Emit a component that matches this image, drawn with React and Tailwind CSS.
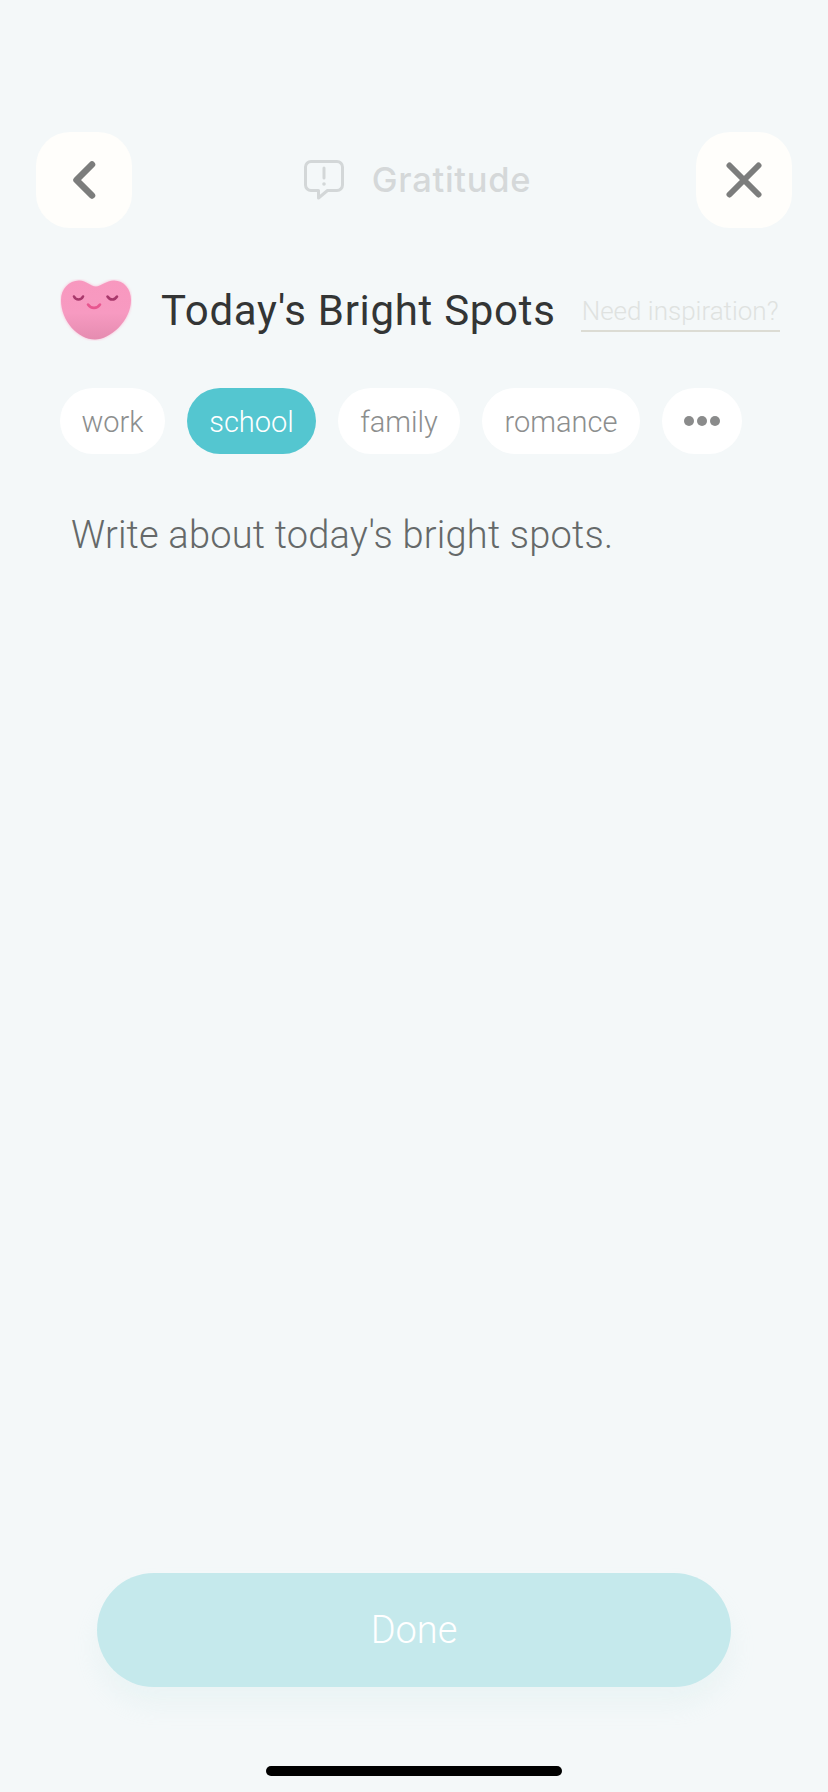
const chips = [
  { label: 'work', w: 'w-[105px]' },
  { label: 'school', w: 'w-[129px]', active: true },
  { label: 'family', w: 'w-[122px]' },
  { label: 'romance', w: 'w-[158px]' },
]

const heartPath = 'M19 1.5C27 1.5 30 7.5 36 7.5C41 7.5 46 1.5 54 1.5C64 1.5 71 10 71 21C71 42 50 60.5 35 60.5C18 60.5 1 42 1 21C1 10 9 1.5 19 1.5Z'

function IconButton({ children }) {
  return (
    <button className="w-[96px] h-[96px] rounded-[34px] bg-[#fffefb] flex items-center justify-center">
      {children}
    </button>
  )
}

function Heart() {
  return (
    <svg width="72" height="62" viewBox="0 0 72 62" className="shrink-0">
      <defs>
        <linearGradient id="heart" x1="0" y1="0" x2="0" y2="1">
          <stop offset="0" stopColor="#f898bf" />
          <stop offset="0.55" stopColor="#f79ac1" />
          <stop offset="1" stopColor="#e58cb0" />
        </linearGradient>
        <filter id="glow" x="-20%" y="-20%" width="140%" height="140%">
          <feGaussianBlur stdDeviation="1.5" />
        </filter>
      </defs>
      <path d={heartPath} fill="#fbb8d3" filter="url(#glow)" />
      <path d={heartPath} fill="url(#heart)" />
      <path d="M14 17.5C16 21.5 21 21.5 23 17.5M47.5 17.5C50 21.5 54.5 21.5 57 17.5" fill="none" stroke="#a8386b" strokeWidth="2.6" strokeLinecap="round" />
      <path d="M28 25.5C31 30 37 30 40 25.5" fill="none" stroke="#e8568f" strokeWidth="2.6" strokeLinecap="round" />
    </svg>
  )
}

export default function App() {
  return (
    <div className="w-[828px] h-[1792px] bg-[#f4f8f9] flex flex-col pt-[132px] font-['Roboto',sans-serif]">
      {/* Header */}
      <header className="flex items-center justify-between pl-[36px] pr-[36px]">
        <IconButton>
          <svg width="24" height="38" viewBox="0 0 24 38">
            <path d="M20 3.5L4.5 19L20 34.5" fill="none" stroke="#7c7d7c" strokeWidth="6.5" strokeLinecap="round" strokeLinejoin="round" />
          </svg>
        </IconButton>
        <div className="flex items-center gap-[27px] ml-[6px]">
          <svg width="42" height="42" viewBox="0 0 42 42">
            <path d="M8 2.5H34C37 2.5 39.5 5 39.5 8V26C39.5 29 37 31.5 34 31.5H24.5L15.5 39V31.5H8C5 31.5 2.5 29 2.5 26V8C2.5 5 5 2.5 8 2.5Z" fill="none" stroke="#d3d7d8" strokeWidth="3" strokeLinejoin="round" />
            <path d="M21 9V19" stroke="#d3d7d8" strokeWidth="3" strokeLinecap="round" />
            <circle cx="21" cy="25" r="1.8" fill="#d3d7d8" />
          </svg>
          <span className="text-[34.5px] font-medium tracking-[0.7px] text-[#d5d8d9] font-['Inter',sans-serif]">Gratitude</span>
        </div>
        <IconButton>
          <svg width="36" height="36" viewBox="0 0 36 36">
            <path d="M3.5 3.5L32.5 32.5M32.5 3.5L3.5 32.5" fill="none" stroke="#7c7d7c" strokeWidth="6" strokeLinecap="round" />
          </svg>
        </IconButton>
      </header>

      {/* Title row */}
      <div className="flex items-center mt-[51px] pl-[60px] h-[62px]">
        <Heart />
        <h1 className="ml-[29px] text-[42px] tracking-[0.7px] leading-[64px] text-[#333535] font-normal whitespace-nowrap pt-[2px]">Today's Bright Spots</h1>
        <a className="ml-[25px] w-[199px] border-b-2 border-[#dcdcd4] text-[26px] leading-[34px] font-light text-[#dfe2e0] text-center whitespace-nowrap pb-[2px] mt-[5px]">Need inspiration?</a>
      </div>

      {/* Tags */}
      <div className="flex gap-[22px] mt-[47px] pl-[60px]">
        {chips.map(c => (
          <span
            key={c.label}
            className={`h-[66px] rounded-full flex items-center justify-center text-[29px] leading-[70px] font-light pt-[2px] ${c.w} ${
              c.active ? 'bg-[#54c6d0] text-white' : 'bg-white text-[#8c8e8e]'
            }`}
          >
            {c.label}
          </span>
        ))}
        <span className="w-[80px] h-[66px] rounded-full bg-white flex items-center justify-center gap-[3px]">
          <span className="w-[10px] h-[10px] rounded-full bg-[#8a8b8b]" />
          <span className="w-[10px] h-[10px] rounded-full bg-[#8a8b8b]" />
          <span className="w-[10px] h-[10px] rounded-full bg-[#8a8b8b]" />
        </span>
      </div>

      <p className="mt-[56px] pl-[71px] text-[38px] tracking-[0.2px] leading-[50px] font-light text-[#656969]">Write about today's bright spots.</p>

      {/* Done */}
      <div className="mt-auto flex flex-col items-center">
        <button className="w-[634px] h-[114px] rounded-full bg-[#c5e9ec] text-white text-[38px] font-light shadow-[0_18px_24px_rgba(200,232,232,0.2)]">Done</button>
        <div className="w-[296px] h-[10px] rounded-full bg-black mt-[79px] mb-[16px]" />
      </div>
    </div>
  )
}
